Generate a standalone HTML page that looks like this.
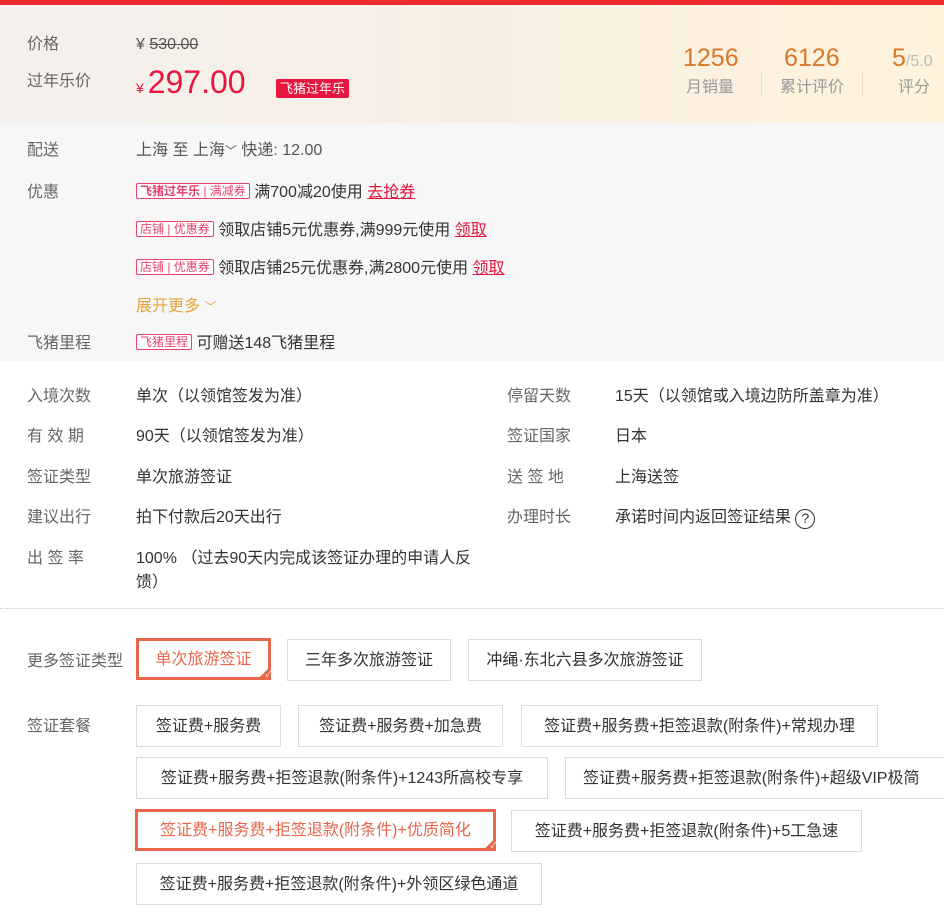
<!DOCTYPE html>
<html><head><meta charset="utf-8"><style>
*{margin:0;padding:0;box-sizing:border-box}
body{width:944px;height:912px;overflow:hidden;background:#fff;font-family:"Liberation Sans","Noto Sans CJK SC",sans-serif;font-size:16px;color:#333;position:relative}
.a{position:absolute;white-space:nowrap;line-height:20px;margin-top:2px}
.l{color:#666;left:27px}
.g{color:#666}
.tag{display:inline-block;border:1px solid #e8436a;color:#e8436a;font-size:12px;line-height:14px;padding:0 3px;border-radius:2px;vertical-align:2px;background:#fff}
.b{position:absolute;border:1px solid #ddd;height:42px;line-height:42px;text-align:center;font-size:16px;color:#333;background:#fff}
.s{border:3px solid #e8664c;color:#e8664c;line-height:38px}
.s:after{content:"✓";position:absolute;right:-3px;bottom:-3px;width:14px;height:14px;background:linear-gradient(135deg,transparent 50%,#e8664c 50%);color:#fff;font-size:8px;line-height:18px;text-align:right}
</style></head><body>
<div style="position:absolute;left:0;top:0;width:944px;height:5px;background:#ee2a2e"></div>
<div style="position:absolute;left:0;top:5px;width:944px;height:118px;background:linear-gradient(90deg,#f4f1ee,#f8efe4 50%,#fff3dc)"></div>
<div style="position:absolute;left:0;top:123px;width:944px;height:238px;background:#f7f7f7"></div>
<div class="a l" style="top:33px">价格</div>
<div class="a" style="left:136px;top:33px;color:#555"><span>¥ </span><span style="text-decoration:line-through">530.00</span></div>
<div class="a l" style="top:70px">过年乐价</div>
<div class="a" style="left:136px;top:62px;color:#e8163e;line-height:36px"><span style="font-size:14px">¥ </span><span style="font-size:32px">297.00</span></div>
<div class="a" style="left:276px;top:77px;background:#e8163e;color:#fff;font-size:13px;line-height:19px;padding:0 4px;border-radius:2px">飞猪过年乐</div>
<div class="a" style="left:683px;top:42px;color:#d7782a;font-size:25px;line-height:28px">1256</div>
<div class="a g" style="left:686px;top:76px;color:#999">月销量</div>
<div style="position:absolute;left:761px;top:72px;width:1px;height:24px;background:#e5dccc"></div>
<div class="a" style="left:784px;top:42px;color:#d7782a;font-size:25px;line-height:28px">6126</div>
<div class="a" style="left:780px;top:76px;color:#999">累计评价</div>
<div style="position:absolute;left:862px;top:72px;width:1px;height:24px;background:#e5dccc"></div>
<div class="a" style="left:892px;top:42px;color:#d7782a;font-size:25px;line-height:28px">5<span style="font-size:16px;color:#bbb">/5.0</span></div>
<div class="a" style="left:898px;top:76px;color:#999">评分</div>

<div class="a l" style="top:139px">配送</div>
<div class="a" style="left:136px;top:139px;color:#555">上海 至 上海<span style="font-size:12px">﹀</span> 快递: 12.00</div>
<div class="a l" style="top:181px">优惠</div>
<div class="a" style="left:136px;top:181px"><span class="tag"><b>飞猪过年乐</b> | 满减券</span> 满700减20使用 <span style="color:#e8163e;text-decoration:underline">去抢券</span></div>
<div class="a" style="left:136px;top:219px"><span class="tag">店铺 | 优惠券</span> 领取店铺5元优惠券,满999元使用 <span style="color:#e8163e;text-decoration:underline">领取</span></div>
<div class="a" style="left:136px;top:257px"><span class="tag">店铺 | 优惠券</span> 领取店铺25元优惠券,满2800元使用 <span style="color:#e8163e;text-decoration:underline">领取</span></div>
<div class="a" style="left:136px;top:295px;color:#e8a23c">展开更多 <span style="font-size:12px">﹀</span></div>
<div class="a l" style="top:332px">飞猪里程</div>
<div class="a" style="left:136px;top:332px"><span class="tag">飞猪里程</span> 可赠送148飞猪里程</div>

<div class="a l" style="top:385px">入境次数</div><div class="a" style="left:136px;top:385px">单次（以领馆签发为准）</div>
<div class="a l" style="top:425px">有 效 期</div><div class="a" style="left:136px;top:425px">90天（以领馆签发为准）</div>
<div class="a l" style="top:466px">签证类型</div><div class="a" style="left:136px;top:466px">单次旅游签证</div>
<div class="a l" style="top:506px">建议出行</div><div class="a" style="left:136px;top:506px">拍下付款后20天出行</div>
<div class="a l" style="top:547px">出 签 率</div><div class="a" style="left:136px;top:545px;line-height:24px;white-space:normal;width:350px">100% （过去90天内完成该签证办理的申请人反馈）</div>
<div class="a g" style="left:507px;top:385px">停留天数</div><div class="a" style="left:615px;top:385px">15天（以领馆或入境边防所盖章为准）</div>
<div class="a g" style="left:507px;top:425px">签证国家</div><div class="a" style="left:615px;top:425px">日本</div>
<div class="a g" style="left:507px;top:466px">送 签 地</div><div class="a" style="left:615px;top:466px">上海送签</div>
<div class="a g" style="left:507px;top:506px">办理时长</div><div class="a" style="left:615px;top:506px">承诺时间内返回签证结果 <span style="display:inline-block;width:20px;height:20px;border:1.5px solid #333;border-radius:50%;text-align:center;font-size:14px;line-height:17px;vertical-align:-1px">?</span></div>
<div style="position:absolute;left:0;top:608px;width:944px;border-top:1px dotted #ccc"></div>

<div class="a l" style="top:650px">更多签证类型</div>
<div class="b s" style="left:136px;top:638px;width:135px">单次旅游签证</div>
<div class="b" style="left:287px;top:639px;width:164px">三年多次旅游签证</div>
<div class="b" style="left:468px;top:639px;width:234px">冲绳·东北六县多次旅游签证</div>
<div class="a l" style="top:715px">签证套餐</div>
<div class="b" style="left:136px;top:705px;width:145px">签证费+服务费</div>
<div class="b" style="left:298px;top:705px;width:205px">签证费+服务费+加急费</div>
<div class="b" style="left:521px;top:705px;width:357px">签证费+服务费+拒签退款(附条件)+常规办理</div>
<div class="b" style="left:136px;top:757px;width:412px">签证费+服务费+拒签退款(附条件)+1243所高校专享</div>
<div class="b" style="left:565px;top:757px;width:390px;text-align:left;padding-left:17px">签证费+服务费+拒签退款(附条件)+超级VIP极简</div>
<div class="b s" style="left:135px;top:809px;width:361px">签证费+服务费+拒签退款(附条件)+优质简化</div>
<div class="b" style="left:511px;top:810px;width:351px">签证费+服务费+拒签退款(附条件)+5工急速</div>
<div class="b" style="left:136px;top:863px;width:406px">签证费+服务费+拒签退款(附条件)+外领区绿色通道</div>
</body></html>
